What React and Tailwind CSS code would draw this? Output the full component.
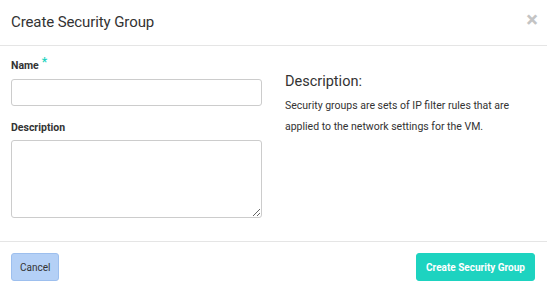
export default function App() {
  const font = { fontFamily: '"Roboto", "Liberation Sans", sans-serif' };
  return (
    <div className="w-[547px] h-[292px] bg-white text-[#333] overflow-hidden flex flex-col" style={font}>
      <div className="h-[46px] flex items-center justify-between pl-[11px] pr-[9px] border-b border-[#e5e5e5] shrink-0">
        <h4 className="text-[15px] leading-none tracking-[-0.1px] text-[#333]">Create Security Group</h4>
        <span className="text-[#c4c4c4] text-[22px] font-bold leading-none -mt-[6px]">×</span>
      </div>
      <div className="flex-1 flex pt-[15px] px-[11px]">
        <div className="w-[251px] flex flex-col">
          <label className="text-[10.5px] font-bold text-[#333] leading-none flex items-start">
            Name<span className="text-[#1dd3c0] text-[12px] font-bold ml-[3px] -mt-[5px]">*</span>
          </label>
          <input className="mt-[7px] h-[27px] w-full border border-[#cccccc] rounded-[3px]" />
          <label className="mt-[17px] text-[10.5px] font-bold text-[#333] leading-none">Description</label>
          <textarea className="mt-[7px] h-[78px] w-full border border-[#cccccc] rounded-[3px] resize-y" />
        </div>
        <div className="ml-[23px] w-[240px]">
          <h3 className="mt-[14px] text-[14.5px] leading-none text-[#333]">Description:</h3>
          <p className="mt-[5px] text-[10.5px] leading-[21px] text-[#333]">
            Security groups are sets of IP filter rules that are applied to the network settings for the VM.
          </p>
        </div>
      </div>
      <div className="h-[51px] border-t border-[#e5e5e5] flex items-start justify-between pl-[11px] pr-[12px] pt-[11px] shrink-0">
        <button className="h-[28px] px-[8px] bg-[#b4d0f6] border border-[#9dbfee] rounded-[3px] text-[10px] text-[#333]">Cancel</button>
        <button className="h-[28px] px-[9px] bg-[#1dd3c0] border border-[#1dd3c0] rounded-[3px] text-[10px] font-bold text-white">Create Security Group</button>
      </div>
    </div>
  );
}
